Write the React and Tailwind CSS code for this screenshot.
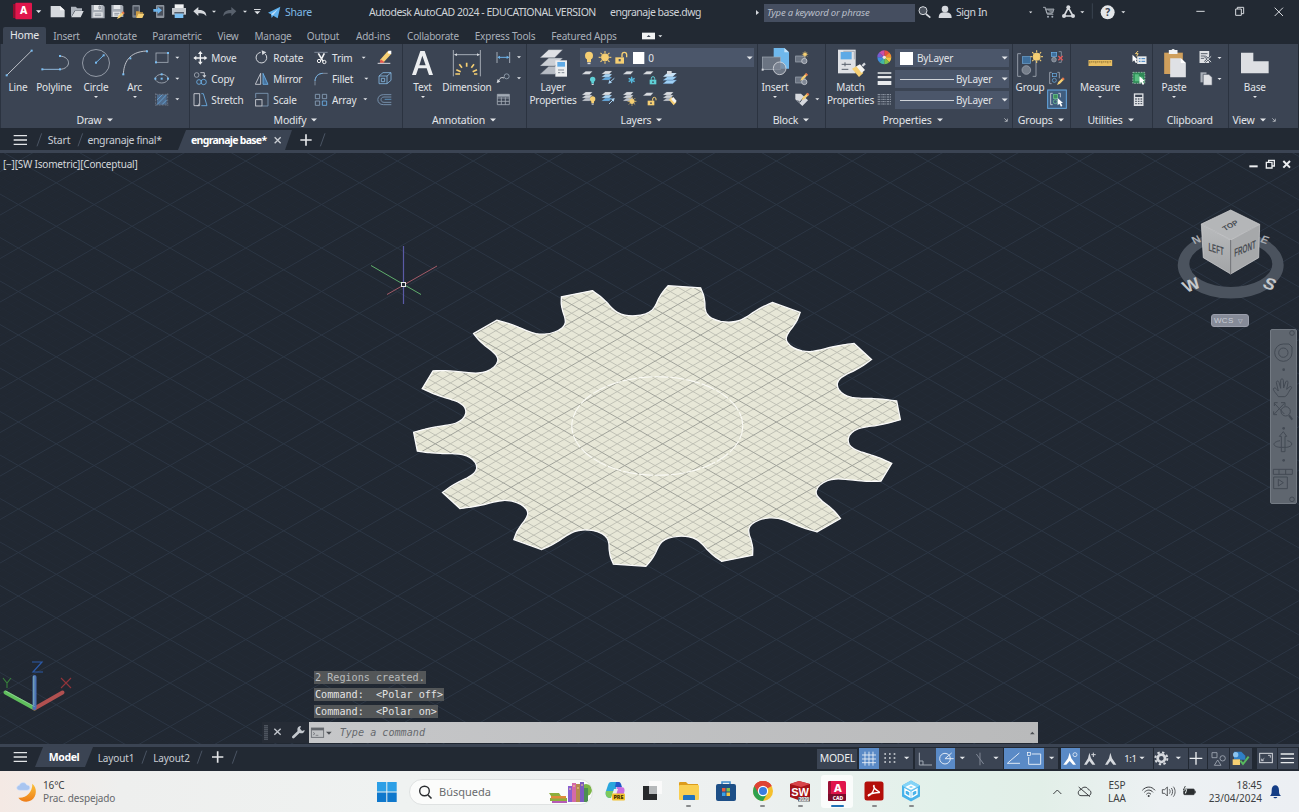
import React from "react";

const W = "#d6d9de";
const G = "#a3abb6";
const B = "#6db3ea";
const Y = "#f6cf73";

/* Icon tile: art is drawn on a 3x grid, so 3 units are one pixel. */
function S({ v, children, className = "" }) {
  const [, , w, h] = v.split(" ").map(Number);
  return (
    <svg width={w / 3} height={h / 3} viewBox={v} fill="none" className={"block shrink-0 " + className}>
      {children}
    </svg>
  );
}
const Tri = ({ x, y, s = 6 }) => <path d={`M${x - s} ${y - s / 2}h${2 * s}l${-s} ${s}z`} fill="#e3e6ea" />;
const Dots = ({ p }) => p.map(([x, y]) => <rect key={x + "-" + y} x={x - 3} y={y - 3} width="6" height="6" fill="#79bdf2" />);

function Panel({ w, label, caret = true, launch = null, foot = "justify-center", children }) {
  return (
    <section className={"flex h-[84px] shrink-0 flex-col bg-[#3b4453] pt-[3px] shadow-[inset_1px_0_0_#2b3340] " + w}>
      <div className="flex h-[63px]">{children}</div>
      <div className={"flex h-[18px] items-center gap-[5px] pt-[2px] text-[10.500px] tracking-[-0.2px] " + foot}>
        <span>{label}</span>
        {caret && <S v="0 0 18 12"><Tri x={9} y={6} s={9} /></S>}
        {launch}
      </div>
    </section>
  );
}
function Big({ v, label, label2, caretY = false, children }) {
  const w = Number(v.split(" ")[2]) / 3;
  return (
    <div className="flex shrink-0 flex-col items-center whitespace-nowrap" style={{ width: w }}>
      <S v={v}>{children}</S>
      <span className="h-[13px] pt-px leading-[13px]">{label}</span>
      {label2 && <span className="h-[13px] pt-px leading-[13px]">{label2}</span>}
      {caretY && <S v="0 0 12 21"><Tri x={6} y={12} s={6} /></S>}
    </div>
  );
}
const Cmd = ({ v, label, children, w }) => (
  <div className={"flex h-[21px] items-center gap-[3px] whitespace-nowrap " + w}>
    <S v={v}>{children}</S>
    <span className="pt-px">{label}</span>
  </div>
);
const Launch = () => (
  <S v="0 0 18 18"><path d="M4 4l8 8M13 5v8H5" stroke={W} strokeWidth="2" /></S>
);
const Sheet = ({ x, y, c = "#dadde1", s = 1 }) => (
  <path d={`M${x} ${y + 9 * s}l${11 * s} ${-9 * s}h${20 * s}l${-8 * s} ${9 * s}z`} fill={c} stroke="#6b7480" strokeWidth=".7" />
);
const Stack = ({ x, y, blue }) => (
  <g>
    <Sheet x={x} y={y + 18} c={blue ? "#62a8de" : "#b9bec6"} />
    <Sheet x={x} y={y + 9} c={blue ? "#a8d3f3" : "#cdd1d7"} />
    <Sheet x={x} y={y} />
  </g>
);
const Bulb = ({ x, y, c, s = 1 }) => (
  <g fill={c}>
    <circle cx={x} cy={y} r={8 * s} />
    <rect x={x - 4 * s} y={y + 5 * s} width={8 * s} height={8 * s} />
    <rect x={x - 3 * s} y={y + 14 * s} width={6 * s} height={3 * s} fill={W} />
  </g>
);
const Sun = ({ x, y, r = 8, c = Y }) => (
  <g stroke={c} strokeWidth={r * 0.32}>
    <circle cx={x} cy={y} r={r} fill={c} />
    {[0, 45, 90, 135, 180, 225, 270, 315].map((a) => (
      <path key={a} d={`M${x} ${y - r * 1.25}V${y - r * 1.9}`} transform={`rotate(${a} ${x} ${y})`} />
    ))}
  </g>
);
const Lock = ({ x, y, c, open }) => (
  <g>
    <rect x={x} y={y} width="20" height="14" fill={c} />
    <path d={open ? `M${x + 15} ${y}v-5a5 5 0 0 1 10 0v4` : `M${x + 5} ${y}v-4a5 5 0 0 1 10 0v4`} stroke={c} strokeWidth="3" />
    <rect x={x + 8} y={y + 5} width="4" height="5" fill="#3b4453" />
  </g>
);
const Pencil = ({ x, y }) => (
  <g>
    <path d={`M${x} ${y}l4 -9l13 -13l5 5l-13 13z`} fill={Y} />
    <path d={`M${x + 14} ${y - 19}l4 -4l5 5l-4 4z`} fill="#e5734a" />
  </g>
);

function TitleBar() {
  return (
    <header className="flex h-[25px] items-center pl-[10px] text-[10.500px] tracking-[-0.25px]">
      <S v="30 0 105 75">
        <path d="M39 12h8v42h-8z" fill="#8f0d2e" />
        <rect x="46" y="8" width="50" height="50" rx="3" fill="#e0164c" />
        <text x="71" y="43" fontSize="31" fontWeight="800" fill="#fff" textAnchor="middle" fontFamily="Noto Sans, sans-serif">A</text>
        <Tri x={116} y={35} s={8} />
      </S>
      <S v="135 0 70 75"><path d="M152 18h28l14 13v21h-42z" fill={W} /><path d="M180 18v13h14z" fill="#f6f7f8" /></S>
      <S v="205 0 60 75"><path d="M214 52V20h14l5 5h14v7h-22z" fill="#aeb4bd" /><path d="M226 33h26l-9 19h-28z" fill={W} /></S>
      <S v="265 0 60 75"><path d="M275 15h35l5 5v35h-40z" fill="#a7adb6" /><path d="M283 15h22v15h-22zM281 37h28v15h-28z" fill="#e5e7ea" /><path d="M298 18h4v9h-4zM285 42h20M285 47h20" stroke="#626b78" strokeWidth="2" /></S>
      <S v="325 0 60 75"><path d="M335 15h32l4 4v32h-36z" fill="#a7adb6" /><path d="M342 15h20v12h-20zM340 35h22v15h-22z" fill="#e5e7ea" /><path d="M344 40h15M344 45h12" stroke="#626b78" strokeWidth="2" /><Pencil x={352} y={57} /></S>
      <S v="385 0 60 75"><rect x="398" y="15" width="23" height="38" rx="3" fill="#7e858f" /><path d="M402 20h15v26h-15z" fill="#4b525e" /><path d="M409 53V34h10l3 3h8v4h-10z" fill="#c99a45" /><path d="M416 41h18l-6 13h-18z" fill={Y} /></S>
      <S v="445 0 60 75"><rect x="469" y="15" width="25" height="39" rx="3" fill="#8c939d" /><rect x="473" y="20" width="17" height="27" fill="#4b525e" /><path d="M461 27h13v-7l13 11l-13 11v-7h-13z" fill="#6db3ea" /></S>
      <S v="505 0 60 75"><path d="M525 13h27v13h-27z" fill="#f2f3f4" /><path d="M517 24h42v20h-42z" fill="#c5c9cf" /><path d="M524 36h29v5h-29z" fill="#555d69" /><path d="M525 41h26v13h-26z" fill="#7cc0f3" /></S>
      <S v="565 0 95 75"><path d="M581 34l15-13v9c16-1 24 6 24 19c-5-8-12-10-24-9v8z" fill={W} /><Tri x={643} y={35} s={6} /></S>
      <S v="660 0 90 75"><path d="M709 34l-15-13v9c-16-1-24 6-24 19c5-8 12-10 24-9v8z" fill="#59616d" /><Tri x={735} y={35} s={6} /></S>
      <S v="750 0 105 75"><path d="M762 27h20v3h-20z" fill={W} /><Tri x={772} y={38} s={9} /><path d="M804 38l37-18l-8 35l-13-8l-5 7l-2-11z" fill="#5fb1ef" /><path d="M813 43l22-17l-16 20" fill="#bfe0fa" /></S>
      <span className="w-[84px] text-[10.500px] text-[#7fb9e6]">Share</span>
      <span className="w-[241px] whitespace-nowrap tracking-[-0.48px] text-[#cfd3d8]">Autodesk AutoCAD 2024 - EDUCATIONAL VERSION</span>
      <span className="w-[145px] whitespace-nowrap tracking-[-0.5px] text-[#cfd3d8]">engranaje base.dwg</span>
      <S v="15 0 30 75" className="-ml-px"><path d="M21 30v15l9-7z" fill={W} /></S>
      <div className="flex h-[18px] w-[151px] items-center whitespace-nowrap bg-[#454e60] pl-[3px] text-[9.500px] italic tracking-[-0.2px] text-[#b9bfc9]">Type a keyword or phrase</div>
      <S v="499 0 123 75">
        <circle cx="523" cy="32" r="12" fill="#4a515c" stroke={W} strokeWidth="3" /><path d="M532 42l13 11" stroke={W} strokeWidth="5" />
        <circle cx="589" cy="27" r="10" fill={W} /><path d="M570 54c0-14 8-17 19-17s20 3 20 17z" fill={W} />
      </S>
      <span className="w-[68px] tracking-[-0.45px] text-[#d5d8dd]">Sign In</span>
      <S v="75 0 207 75">
        <Tri x={95} y={37} s={5} />
        <path d="M132 22h7l6 21h18M140 27h25l-4 12h-18z" stroke="#a7adb6" fill="#a7adb6" strokeWidth="2.5" fillOpacity=".6" /><circle cx="147" cy="50" r="3" fill={G} /><circle cx="160" cy="50" r="3" fill={G} />
        <path d="M208 23l-13 25h27z" stroke={W} strokeWidth="5" strokeLinejoin="round" /><circle cx="208" cy="22" r="6" fill={W} /><circle cx="195" cy="48" r="6" fill={W} /><circle cx="222" cy="48" r="6" fill={W} />
        <Tri x={250} y={37} s={6} /><path d="M280 10v46" stroke="#3a4350" strokeWidth="3" />
      </S>
      <S v="282 0 115 75"><circle cx="326" cy="37" r="21" fill="#e4e6e9" /><text x="326" y="48" fontSize="31" fontWeight="700" textAnchor="middle" fill="#3a4350" fontFamily="Noto Sans, sans-serif">?</text><Tri x={373} y={37} s={6} /></S>
      <S v="580 0 300 75" className="ml-auto mr-[6px]">
        <path d="M590 34h25M708 27h17v19h-17zM713 27v-5h19v19h-7M825 23l25 25M850 23l-25 25" stroke={W} strokeWidth="3" />
      </S>
    </header>
  );
}

const MENU = [
  ["Insert", "w-[41px]"], ["Annotate", "w-[58px]"], ["Parametric", "w-[64px]"], ["View", "w-[38px]"], ["Manage", "w-[52px]"],
  ["Output", "w-[48px]"], ["Add-ins", "w-[52px]"], ["Collaborate", "w-[68px]"], ["Express Tools", "w-[76px]"], ["Featured Apps", "w-[82px]"],
];
function MenuTabs() {
  return (
    <nav className="flex h-[19px] items-center pl-[3px] text-[10px] tracking-[-0.2px] text-[#a9afb9]">
      <span className="mt-[2px] flex h-[17px] w-[43px] items-center justify-center rounded-t-[2px] bg-[#3b4453] text-[10.500px] text-[#e6e8eb]">Home</span>
      {MENU.map(([t, w]) => <span key={t} className={"mt-[3px] whitespace-nowrap text-center " + w}>{t}</span>)}
      <S v="675 75 130 57"><rect x="726" y="98" width="39" height="20" fill="#f1f2f3" /><path d="M740 111h12l-6-6z" fill="#3b4453" /><Tri x={781} y={109} s={6} /></S>
    </nav>
  );
}

function Ribbon() {
  return (
    <div className="flex h-[84px] text-[10px] tracking-[-0.15px] text-[#e2e5e9]">
      <Panel w="w-[189px]" label="Draw">
        <Big v="0 141 108 99" label="Line"><path d="M20 226L95 152" stroke={W} strokeWidth="2.5" /><Dots p={[[20, 226], [95, 152]]} /></Big>
        <Big v="108 141 108 99" label="Polyline"><path d="M127 208h53" stroke="#8fb6d8" strokeWidth="3" /><path d="M180 168c34 3 34 38 0 40" stroke={G} strokeWidth="3" /><Dots p={[[127, 208], [180, 208], [180, 168]]} /></Big>
        <Big v="216 141 144 99" label="Circle" caretY><circle cx="288" cy="189" r="40.5" stroke={G} strokeWidth="2.5" /><path d="M288 188l23-22" stroke={B} strokeWidth="3" /><Dots p={[[288, 188], [311, 166]]} /></Big>
        <Big v="360 141 87 99" label="Arc" caretY><path d="M370 225C371 190 385 155 441 153" stroke={W} strokeWidth="2.5" /><Dots p={[[370, 223], [391, 175], [441, 154]]} /></Big>
        <div>
          <S v="447 141 100 63"><rect x="468" y="159" width="36" height="28" stroke={G} strokeWidth="2.5" /><Dots p={[[468, 187], [504, 159]]} /><Tri x={532} y={173} /></S>
          <S v="447 204 100 63"><ellipse cx="485" cy="236" rx="19" ry="13" stroke={G} strokeWidth="2.5" /><Dots p={[[485, 236], [466, 236], [485, 223], [504, 236]]} /><Tri x={532} y={236} /></S>
          <S v="447 267 100 63"><rect x="471" y="284" width="29" height="30" fill="#4f6d8f" /><path d="M471 300l16-16M471 314l29-30M486 314l14-14" stroke={B} strokeWidth="2" /><path d="M467 280v38M503 280v38M467 283h38M467 315h38" stroke="#7f8a99" strokeWidth="2" strokeDasharray="6 3" /><Tri x={532} y={298} /></S>
        </div>
      </Panel>

      <Panel w="w-[213px]" label="Modify">
        <div className="w-[62px] pl-[4px]">
          <Cmd v="579 150 46 48" label="Move" w="w-[62px]"><path d="M601 157v34M584 174h34" stroke="#f0f1f3" strokeWidth="4" /><path d="M601 153l7 9h-14zM601 194l7-9h-14zM580 174l9-7v14zM622 174l-9-7v14z" fill="#f0f1f3" /></Cmd>
          <Cmd v="579 213 46 48" label="Copy" w="w-[62px]"><circle cx="590" cy="225" r="7" stroke={G} strokeWidth="2.5" /><path d="M601 218h12v9" stroke={W} strokeWidth="2.5" /><path d="M607 226h12l-6 7z" fill={W} /><circle cx="597" cy="246" r="7" stroke={B} strokeWidth="2.5" /><circle cx="611" cy="246" r="8" stroke={B} strokeWidth="2.5" /></Cmd>
          <Cmd v="579 276 46 48" label="Stretch" w="w-[62px]"><path d="M582 281h17v36h-17z" stroke={W} strokeWidth="2.5" /><path d="M604 281l6 0l11 36h-17" stroke={B} strokeWidth="2.5" /><path d="M590 317h6v-6" stroke={W} strokeWidth="2" /></Cmd>
        </div>
        <div className="w-[59px] pl-[4px]">
          <Cmd v="765 150 46 48" label="Rotate" w="w-[59px]"><path d="M796 162a16 16 0 1 1-14-5" stroke={W} strokeWidth="3" /><path d="M785 151l14 6l-12 8z" fill={W} /></Cmd>
          <Cmd v="765 213 46 48" label="Mirror" w="w-[59px]"><path d="M782 220v33h-16z" stroke={W} strokeWidth="2.5" /><path d="M789 220v33h15z" stroke={B} strokeWidth="2.5" fill="#47729d" /></Cmd>
          <Cmd v="765 276 46 48" label="Scale" w="w-[59px]"><path d="M767 294v-14h37v38h-17" stroke="#7f9cba" strokeWidth="2.5" /><rect x="767" y="299" width="19" height="19" stroke={W} strokeWidth="2.5" /></Cmd>
        </div>
        <div className="w-[69px] pl-[3px]">
          <div className="flex"><Cmd v="940 150 48 48" label="Trim" w="w-[47px]"><path d="M944 157h40" stroke="#7f8a99" strokeWidth="3" /><path d="M956 160l14 24M974 160l-10 20" stroke="#f2f3f4" strokeWidth="5" /><circle cx="958" cy="183" r="5" stroke="#f2f3f4" strokeWidth="3" /><circle cx="974" cy="186" r="5" stroke="#f2f3f4" strokeWidth="3" /></Cmd><S v="1081 141 30 63"><Tri x={1092} y={173} /></S></div>
          <div className="flex"><Cmd v="940 213 48 48" label="Fillet" w="w-[47px]"><path d="M946 256v-12c0-14 9-24 24-24h14" stroke="#7f8a99" strokeWidth="3" /><path d="M946 243c1-13 9-22 23-23" stroke={B} strokeWidth="2.5" /></Cmd><S v="1081 204 30 63"><Tri x={1100} y={236} /></S></div>
          <div className="flex"><Cmd v="940 276 48 48" label="Array" w="w-[47px]"><path d="M947 283h13v13h-13zM968 283h13v13h-13zM947 303h13v13h-13z" stroke="#8ba3bd" strokeWidth="2.5" /><path d="M968 303h13v13h-13z" stroke={B} strokeWidth="2.5" /></Cmd><S v="1081 267 30 63"><Tri x={1097} y={298} /></S></div>
        </div>
        <div className="-ml-[2px]">
          <S v="1134 141 54 63"><path d="M1142 181l24-27l10 9l-22 24z" fill={Y} /><path d="M1168 152l9 0l0 11l-11-3z" fill="#fff" /><path d="M1145 178l12 9l-7 3h-8z" fill="#e4574c" /><path d="M1136 190h38" stroke={W} strokeWidth="3" /></S>
          <S v="1134 204 54 63"><path d="M1140 228h24v23h-24zM1140 228l12-10h24v23l-12 10M1164 228l12-10M1147 235h10v10h-10z" stroke="#86b8e2" strokeWidth="2.5" /></S>
          <S v="1134 267 54 63"><path d="M1177 284h-24c-22 0-22 30 0 30h24M1177 291h-22c-12 0-12 16 0 16h22" stroke="#7f9cba" strokeWidth="2.5" /><path d="M1177 298h-20" stroke={B} strokeWidth="2" /></S>
        </div>
      </Panel>

      <Panel w="w-[124px]" label="Annotation">
        <Big v="6 141 123 99" label="Text" caretY><path d="M36 225L61 153h13l25 72h-12l-7-20H55l-7 20zM58 196h19l-10-29z" fill="#eceef0" /></Big>
        <Big v="129 141 144 99" label="Dimension"><path d="M160 150v79M241 150v79M164 164h74" stroke="#b9bfc8" strokeWidth="2.5" /><path d="M162 164l9-4v8zM240 164l-9-4v8z" fill={W} /><path d="M200 188v12M178 193l8 10M222 193l-8 10M169 209l13 6M231 209l-13 6M166 222h14M222 222h10" stroke={Y} strokeWidth="5" /></Big>
        <div>
          <S v="273 141 105 63"><path d="M291 156v33M329 156v33" stroke={G} strokeWidth="3" /><path d="M294 172h32" stroke={B} strokeWidth="3" /><path d="M292 172l8-5v10zM328 172l-8-5v10z" fill={B} /><Tri x={357} y={172} /></S>
          <S v="273 204 105 63"><path d="M294 247c5-14 10-16 18-13" stroke={W} strokeWidth="3" /><path d="M290 249l3-12l8 8z" fill={W} /><circle cx="320" cy="229" r="7.500" stroke="#8a97a6" strokeWidth="3" /><Tri x={357} y={235} /></S>
          <S v="273 267 105 63"><path d="M292 283h36v31h-36zM292 294h36M292 304h36M304 292v22M316 292v22" stroke={G} strokeWidth="2.5" /><path d="M292 283h36v7h-36z" fill={G} /></S>
        </div>
      </Panel>

      <Panel w="w-[231px]" label="Layers">
        <Big v="378 141 162 99" label="Layer" label2="Properties">
          <path d="M420 223l26-24h42l-24 24z" fill="#b7bcc4" stroke="#59616d" /><path d="M420 198l26-24h42l-24 24z" fill="#cbcfd5" stroke="#59616d" /><path d="M420 173l26-24h42l-24 24z" fill="#dfe1e5" stroke="#59616d" />
          <rect x="466" y="181" width="35" height="49" fill="#eceef0" /><rect x="472" y="186" width="23" height="14" fill="#5eaae6" /><path d="M474 210h18M474 218h7M485 218h8" stroke="#6a7380" strokeWidth="2.500" />
        </Big>
        <div className="pt-px">
          <div className="flex h-[19px] w-[174px] items-center bg-[#4b566a]">
            <S v="540 147 205 54">
              <Bulb x={567} y={167} c={Y} s={1.5} /><Sun x={615} y={172} r={10} /><rect x="646" y="172" width="26" height="19" fill={Y} /><path d="M666 172v-8a7 7 0 0 1 14 0v8" stroke={Y} strokeWidth="4" /><rect x="656" y="177" width="6" height="7" fill="#4b566a" />
              <rect x="699" y="156" width="34" height="36" fill="#fff" />
            </S>
            <span className="flex-1 pt-px">0</span>
            <S v="0 0 27 18"><Tri x={14} y={9} s={9} /></S>
          </div>
          <div className="flex">
            <S v="540 204 61 63"><Sheet x={546} y={217} /><Bulb x={578} y={241} c="#5fd0d6" /></S>
            <S v="601 204 61 63"><Stack x={606} y={216} blue /><path d="M644 238l-14 12" stroke="#a8d3f3" strokeWidth="3" /><path d="M626 254l3-11l8 8z" fill="#a8d3f3" /></S>
            <S v="662 204 61 63"><Sheet x={668} y={217} /><path d="M694 233v20M685 238l18 10M703 238l-18 10" stroke="#55b9dd" strokeWidth="4" /></S>
            <S v="723 204 61 63"><Sheet x={729} y={217} /><Lock x={749} y={242} c="#5fd0d6" /></S>
            <S v="784 204 61 63"><path d="M790 254l13-11h28l-12 11zM790 244l13-11h28l-12 11z" fill="#9fd0f5" stroke="#4b7aa6" /><path d="M790 233l13-11h28l-12 11z" fill="#c8e4fa" /><path d="M802 216h14v10h-14z" fill={W} /></S>
          </div>
          <div className="flex">
            <S v="540 267 61 63"><Stack x={546} y={279} /><Bulb x={578} y={300} c={Y} /></S>
            <S v="601 267 61 63"><Stack x={606} y={279} blue /><path d="M628 315l14-14" stroke="#a8d3f3" strokeWidth="3" /><path d="M645 297l-3 11l-8-8z" fill="#a8d3f3" /></S>
            <S v="662 267 61 63"><Stack x={668} y={279} /><Sun x={695} y={307} r={7} /></S>
            <S v="723 267 61 63"><Sheet x={729} y={281} /><Lock x={743} y={305} c={Y} open /></S>
            <S v="784 267 61 63"><Stack x={790} y={279} /><path d="M808 302l8-8l14 16l-8 9z" fill={Y} /><path d="M814 300l7-6l10 12l-6 6z" fill="#f4f4f2" /></S>
          </div>
        </div>
      </Panel>

      <Panel w="w-[68px]" label="Block">
        <Big v="21 141 108 99" label="Insert" caretY>
          <path d="M71 144h32l14 13v49H71z" fill="#6fb8ec" /><path d="M103 144v13h14z" fill="#c4e2f8" /><rect x="37" y="171" width="54" height="38" fill="#6b7482" stroke={G} strokeWidth="2" /><circle cx="89" cy="205" r="19" fill="#7f8794" fillOpacity=".75" stroke={W} strokeWidth="2.500" /><rect x="35" y="206" width="6" height="6" fill={W} />
        </Big>
        <div>
          <S v="129 141 84 63"><rect x="137" y="168" width="28" height="18" fill="#6b7482" stroke={G} strokeWidth="2" /><circle cx="163" cy="183" r="8" fill="#7f8794" stroke={W} strokeWidth="2" /><Sun x={165} y={163} r={5} /></S>
          <S v="129 204 84 63"><rect x="137" y="231" width="28" height="18" fill="#6b7482" stroke={G} strokeWidth="2" /><circle cx="163" cy="246" r="8" fill="#7f8794" stroke={W} strokeWidth="2" /><Pencil x={151} y={242} /></S>
          <S v="129 267 84 63"><path d="M136 281h17l21 20l-17 17l-21-20z" fill={W} /><path d="M143 301l6 6l16-19" stroke="#3b4453" strokeWidth="3" /><Pencil x={155} y={301} /><Tri x={202} y={298} /></S>
        </div>
      </Panel>

      <Panel w="w-[187px]" label="Properties" foot="relative justify-center pr-[12px]" launch={<span className="absolute right-[3px] top-[7px]"><Launch /></span>}>
        <Big v="228 141 153 99" label="Match" label2="Properties">
          <path d="M267 149h53v71h-53z" fill="#dfe1e5" /><path d="M275 156h33v22h-33z" fill="#5eaae6" /><path d="M283 154h33v24" stroke="#8a929e" strokeWidth="2" /><path d="M278 193h28M288 187v12M278 208h20" stroke="#59616d" strokeWidth="3" />
          <path d="M309 206l16-9l18 22l-13 12z" fill={Y} /><path d="M322 199l11-6l15 17l-10 9z" fill="#f4f4f2" /><path d="M340 198l8-8" stroke={W} strokeWidth="7" />
        </Big>
        <div className="-ml-px w-[20px]">
          <S v="378 141 57 63">
            {["#e94f3d", "#f08a32", "#f5c542", "#7fc24b", "#43b7a5", "#3f8fe0", "#7a5bd0", "#c94fa8"].map((c, i) => (
              <path key={c} d="M406 172V151A21 21 0 0 1 420.900 157.200z" fill={c} transform={`rotate(${i * 45} 406 172)`} />
            ))}
            <circle cx="406" cy="172" r="5" fill="#efe7df" />
          </S>
          <S v="378 204 57 63"><path d="M386 217h41v4h-41zM386 228h41v7h-41zM386 243h41v12h-41z" fill="#e8eaec" /></S>
          <S v="378 267 57 63"><path d="M386 284h41M386 291h41M386 298h41M386 305h41M386 312h41" stroke="#98a0ac" strokeWidth="3" strokeDasharray="7 2 3 2" /></S>
        </div>
        <div className="flex flex-col gap-[3px] pt-[2px]">
          <div className="flex h-[18px] w-[114px] items-center bg-[#4b566a]"><span className="ml-[5px] mr-[4px] size-[13px] bg-white" /><span className="flex-1">ByLayer</span><S v="0 0 27 18"><Tri x={14} y={9} s={9} /></S></div>
          {[0, 1].map((i) => (
            <div key={i} className="flex h-[18px] w-[114px] items-center bg-[#4b566a]"><span className="ml-[5px] mr-[2px] h-px w-[54px] bg-[#cfd3d8]" /><span className="flex-1">ByLayer</span><S v="0 0 27 18"><Tri x={14} y={9} s={9} /></S></div>
          ))}
        </div>
      </Panel>

      <Panel w="w-[57.500px]" label="Groups">
        <Big v="36 141 108 99" label="Group">
          <path d="M63 161h-10v68h10M98 229h10v-68" stroke={G} strokeWidth="2.500" /><rect x="67" y="170" width="24" height="20" fill="#3f6f9c" stroke="#6fa9d8" strokeWidth="2" /><circle cx="79" cy="210" r="13" fill="#767e8a" stroke="#a9afb9" strokeWidth="2" /><Sun x={110} y={170} r={10} />
        </Big>
        <div className="-ml-px">
          <S v="141 141 60 63"><rect x="154" y="157" width="16" height="12" fill="#3f6f9c" stroke={B} strokeWidth="2" /><circle cx="162" cy="179" r="7" fill="#767e8a" stroke={G} strokeWidth="2" /><path d="M176 155h8v32h-8" stroke={G} strokeWidth="2" /><path d="M175 168l13 13M188 168l-13 13" stroke="#e25757" strokeWidth="4" /></S>
          <S v="141 204 60 63"><path d="M155 217h-6v34h6M172 217h6v18" stroke={G} strokeWidth="2.500" /><rect x="157" y="220" width="12" height="10" stroke={B} strokeWidth="2" /><circle cx="163" cy="241" r="6" stroke={B} strokeWidth="2" /><Pencil x={171} y={255} /></S>
          <S v="141 267 60 63"><rect x="143" y="270" width="56" height="55" fill="#405d7e" stroke="#65a9e3" strokeWidth="3" /><path d="M158 280h-6v34h6M175 280h6v12" stroke={W} strokeWidth="2.500" /><rect x="160" y="284" width="13" height="11" fill="#3f8f5c" stroke="#6fce8f" strokeWidth="2" /><circle cx="166" cy="305" r="6" stroke="#6fce8f" strokeWidth="2" /><path d="M173 294v22l5-5l5 9l4-3l-4-8h6z" fill="#fff" /></S>
        </div>
      </Panel>

      <Panel w="w-[82px]" label="Utilities">
        <Big v="208.500 141 183 99" label="Measure" caretY><rect x="264" y="180" width="71" height="18" fill="#e9bf62" /><path d="M268 183v7M274 183v5M280 183v5M286 183v7M292 183v5M298 183v5M304 183v7M310 183v5M316 183v5M322 183v7M329 183v5" stroke="#6b5424" strokeWidth="2" /></Big>
        <div>
          <S v="391.500 141 60 63"><path d="M413 153l-8 8h8l-5 8" stroke={Y} strokeWidth="3" /><path d="M396 164v22l5-5l5 9l4-3l-4-8h6z" fill="#fff" /><rect x="410" y="169" width="28" height="23" fill="#e8eaec" /><path d="M415 176h5M415 184h5M423 176h11M423 184h11" stroke="#3b7fc0" strokeWidth="3" /></S>
          <S v="391.500 204 60 63"><rect x="397" y="217" width="36" height="33" fill="#2f8a57" stroke="#b9d9c5" strokeWidth="2" strokeDasharray="5 3" /><path d="M403 223h12v7h12v14h-24z" fill="#58bd80" /><path d="M417 229v22l5-5l5 9l4-3l-4-8h7z" fill="#fff" /></S>
          <S v="391.500 267 60 63"><rect x="400" y="280" width="29" height="38" fill="#dfe1e5" /><path d="M404 284h21v7h-21z" fill="#3b4453" /><path d="M404 297h21M404 304h21M404 311h21" stroke="#59616d" strokeWidth="4" strokeDasharray="5 3" /></S>
        </div>
      </Panel>

      <Panel w="w-[76.500px]" label="Clipboard" caret={false}>
        <Big v="454.500 141 135 99" label="Paste" caretY><path d="M491 158h56v64h-56z" fill="#cf9f5c" /><path d="M505 150h8c2-4 8-4 10 0h8v12h-26z" fill="#f1f2f3" /><path d="M509 175h32l15 14v43h-47z" fill="#dfe1e5" /><path d="M541 175v14h15z" fill="#fff" /></Big>
        <div>
          <S v="589.500 141 90 63"><path d="M597 153h29v36h-29z" fill="#dfe1e5" /><path d="M601 161h20M601 168h12M601 175h10" stroke="#59616d" strokeWidth="3" /><path d="M613 169l19 17M632 169l-19 17" stroke="#3b4453" strokeWidth="6" /><path d="M613 169l19 17M632 169l-19 17" stroke={W} strokeWidth="3" /><Tri x={657} y={174} /></S>
          <S v="589.500 204 90 63"><path d="M600 217h18v30h-18z" fill="#aab0b9" /><path d="M608 223h17l10 9v24h-27z" fill="#dfe1e5" stroke="#3b4453" strokeWidth="2" /><Tri x={657} y={237} /></S>
        </div>
      </Panel>

      <Panel w="w-[70px]" label="View" foot="pl-[4.500px]" launch={<Launch />}>
        <Big v="684 141 161 99" label="Base" caretY><path d="M723 158h37v26h46v36h-83z" fill="#dddfe3" /></Big>
      </Panel>
    </div>
  );
}

function FileTabs() {
  return (
    <div className="flex h-[25px] items-center border-b-[3px] border-[#3b4453] pl-[10px] pt-[2px] text-[10.500px] tracking-[-0.2px] text-[#c9cdd3]">
      <S v="30 391 105 60"><path d="M41 408h40M41 421h40M41 434h40" stroke="#e3e5e8" strokeWidth="4" /><path d="M111 440l14-39" stroke="#4a5463" strokeWidth="3" /></S>
      <span className="w-[28px] text-center">Start</span>
      <S v="219 391 39 60"><path d="M234 440l14-39" stroke="#4a5463" strokeWidth="3" /></S>
      <span className="w-[77px] whitespace-nowrap text-center tracking-[-0.350px]">engranaje final*</span>
      <div className="ml-[15px] flex h-[20px] w-[114px] items-center bg-[#3b4453] pl-[13px] font-bold text-white [clip-path:polygon(8px_0,100%_0,calc(100%_-_7px)_100%,0_100%)]">
        <span className="w-[82px] whitespace-nowrap tracking-[-0.7px]">engranaje base*</span>
        <S v="820 405 27 30"><path d="M825 412l18 18M843 412l-18 18" stroke="#c9cdd3" strokeWidth="4" /></S>
      </div>
      <S v="876 391 120 60"><path d="M901 421h34M918 404v34" stroke="#e3e5e8" strokeWidth="5" /><path d="M961 440l14-39" stroke="#4a5463" strokeWidth="3" /></S>
    </div>
  );
}

/* Gear outline: 14 teeth on a ground plane seen at the isometric angle. */
const TEETH = 14;
const CX = 657;
const CY = 426;
const PROFILE = [[3.85, 243.6], [5.1, 232], [6.1, 220], [6.8, 210], [7.9, 201], [9.8, 195], [12.857, 192.5]];
const pt = (deg, r) => {
  const a = (deg * Math.PI) / 180;
  return [CX + r * Math.sin(a), CY - r * Math.cos(a) * 0.5765];
};
function gearPath() {
  const step = 360 / TEETH;
  let d = "";
  for (let i = 0; i < TEETH; i++) {
    const c = 6.45 + i * step;
    const run = [
      ...PROFILE.map(([a, r]) => pt(c + a, r)),
      ...PROFILE.slice(0, -1).reverse().map(([a, r]) => pt(c + step - a, r)),
    ];
    d += (i ? "L" : "M") + run[0].map((n) => n.toFixed(1)).join(" ");
    for (let k = 0; k < run.length - 1; k++) {
      const p0 = run[Math.max(0, k - 1)], p1 = run[k], p2 = run[k + 1], p3 = run[Math.min(run.length - 1, k + 2)];
      const q = [p1[0] + (p2[0] - p0[0]) / 6, p1[1] + (p2[1] - p0[1]) / 6, p2[0] - (p3[0] - p1[0]) / 6, p2[1] - (p3[1] - p1[1]) / 6, p2[0], p2[1]];
      d += "C" + q.map((n) => n.toFixed(1)).join(" ");
    }
  }
  return d + "Z";
}
const GEAR = gearPath();

/* Isometric grid: every fifth line in each direction is a major one. */
const SLOPE = 43.5 / 75.8;
function gridPath(major) {
  let d = "";
  for (let k = -130; k <= 130; k++) {
    if ((k % 5 === 0) !== major) continue;
    const y = 313.3 + k * 8.7;
    const l = 662.7 * SLOPE;
    const r = (1299 - 662.7) * SLOPE;
    d += `M0 ${(y - l).toFixed(1)}L1299 ${(y + r).toFixed(1)}M0 ${(y + l).toFixed(1)}L1299 ${(y - r).toFixed(1)}`;
  }
  return d;
}
const MINOR = gridPath(false);
const MAJOR = gridPath(true);

const Face = ({ m, size = 12, w = 700, fill = "#4a4e54", children }) => (
  <text transform={m} fontSize={size} fontWeight={w} fill={fill} textAnchor="middle" fontFamily="Liberation Sans, sans-serif">{children}</text>
);

function Scene() {
  return (
    <svg className="absolute inset-0 block" width="1299" height="591" viewBox="0 153 1299 591" fill="none">
      <defs>
        <clipPath id="gear"><path d={GEAR} /></clipPath>
        <linearGradient id="cubeL" x1="0" y1="0" x2="0" y2="1"><stop stopColor="#b9bbbd" /><stop offset="1" stopColor="#a2a4a6" /></linearGradient>
      </defs>
      <rect y="153" width="1299" height="591" fill="#212832" />
      <path d={MINOR} stroke="#232b36" strokeWidth=".8" />
      <path d={MAJOR} stroke="#2c3644" />
      <path d={GEAR} fill="#e7e7d7" />
      <g clipPath="url(#gear)">
        <path d={MINOR} stroke="#bcbdb2" strokeWidth=".9" />
        <path d={MAJOR} stroke="#a1a39b" />
      </g>
      <path d={GEAR} stroke="#fbfbfb" strokeWidth="1.3" />
      <ellipse cx="657.300" cy="426" rx="85.500" ry="49.300" stroke="#fafaf5" strokeWidth="1.1" strokeDasharray="14 2" />

      <path d="M403.500 246v58" stroke="#5a5aa6" strokeWidth="1.2" />
      <path d="M387 294.500L437 266" stroke="#a35a68" />
      <path d="M371 265.500L421 294.500" stroke="#5fae6c" />
      <rect x="401.500" y="282.500" width="4" height="4" stroke="#e8e8e8" fill="#222933" />

      <path fillRule="evenodd" d="M1177.700 265a53 33.500 0 1 0 106 0a53 33.500 0 1 0 -106 0zM1189.300 264a41.500 23 0 1 0 83 0a41.500 23 0 1 0 -83 0z" fill="#4b535e" />
      <Face m="matrix(.87 -.3 .45 .8 1198 243)" size={12} fill="#a9adb2">N</Face>
      <Face m="matrix(.87 .3 -.45 .8 1263 243)" size={12} fill="#a9adb2">E</Face>
      <Face m="matrix(.95 -.38 .5 .85 1194 290)" size={17} fill="#c6c9cc">W</Face>
      <Face m="matrix(.95 .38 -.5 .85 1267 289)" size={17} fill="#c6c9cc">S</Face>
      <path d="M1230.700 210L1259.700 224.300L1230.700 240L1201.300 224z" fill="#b4b6b8" />
      <path d="M1201.300 224L1230.700 240V274L1203.300 257.700z" fill="url(#cubeL)" />
      <path d="M1259.700 224.300L1230.700 240V274L1258.700 257.700z" fill="#a6a8aa" />
      <path d="M1230.700 210L1259.700 224.300L1230.700 240L1201.300 224zM1201.300 224L1203.300 257.700L1230.700 274V240M1230.700 274L1258.700 257.700L1259.700 224.300" stroke="#d2d3d4" strokeWidth=".7" />
      <path d="M1230.700 240v34" stroke="#6a6d71" />
      <Face m="matrix(.72 -.4 .5 .6 1232 227.500)" size={9.5}>TOP</Face>
      <Face m="matrix(.58 .2 0 1.100 1216 253)" size={10.5}>LEFT</Face>
      <Face m="matrix(.6 -.25 0 1.100 1245 252.500)" size={10.5}>FRONT</Face>

      <g strokeLinecap="round" strokeWidth="4">
        <path d="M34.500 708.500L5.500 692.500" stroke="#5fbf5c" /><path d="M34.500 708.500L62.500 692.500" stroke="#b05050" /><path d="M34.500 708L34.500 677" stroke="#4a72b8" />
      </g>
      <path d="M34.500 706.500L5.500 691M33.800 705V676" stroke="#a6d8b0" strokeOpacity=".6" />
      <path d="M32 662h10l-9 10h10" stroke="#2c5aa8" strokeWidth="1.2" />
      <path d="M3 678l4 5l4-5M7 683v5" stroke="#38803c" strokeWidth="1.1" />
      <path d="M61 678l10 10M71 678l-10 10" stroke="#94343a" strokeWidth="1.1" />
    </svg>
  );
}

function Viewport() {
  return (
    <main className="relative h-[591px] overflow-hidden">
      <Scene />
      <div className="relative flex h-full flex-col">
        <div className="flex h-[21px] items-center justify-between pl-[3px] pr-[7px] text-[10px] text-[#d5d8dc]">
          <span className="tracking-[-0.2px]">[−][SW Isometric][Conceptual]</span>
          <S v="744 469 132 45"><path d="M748 500h25" stroke="#eceef0" strokeWidth="6" /><path d="M799 488h17v17h-17zM806 487v-5h17v17h-6" stroke="#eceef0" strokeWidth="4" /><path d="M850 484l20 20M870 484l-20 20" stroke="#eceef0" strokeWidth="6" /></S>
        </div>
        <div className="mt-auto flex flex-col items-start gap-[4px] pl-[314px] font-['DejaVu_Sans_Mono','Liberation_Mono',monospace] text-[10.150px] leading-[13px] text-[#e4e4e4]">
          <span className="whitespace-pre bg-[#535658] px-px text-[#b9bbbc]">2 Regions created.</span>
          <span className="whitespace-pre bg-[#535658] px-px">Command:  &lt;Polar off&gt;</span>
          <span className="whitespace-pre bg-[#535658] px-px">Command:  &lt;Polar on&gt;</span>
        </div>
        <div className="mb-px mt-[4px] flex h-[21px] items-center pl-[262px]">
          <S v="786 216 141 63" className="bg-[#262c36]">
            <path d="M795 226v44M801 226v44" stroke="#9aa1ab" strokeWidth="3" strokeDasharray="3 3" /><path d="M823 236l19 18M842 236l-19 18" stroke="#c3c7cd" strokeWidth="4" />
            <path d="M880 261l20-19" stroke="#c3c7cd" strokeWidth="8" strokeLinecap="round" /><path d="M903 228a11 11 0 1 0 11 12l-8 3l-6-6z" fill="#c3c7cd" />
          </S>
          <div className="flex h-[21px] w-[729px] items-center bg-gradient-to-r from-[#c6c7c9] to-[#b9babb]">
            <S v="933 216 80 63"><rect x="940" y="234" width="37" height="28" stroke="#63676c" strokeWidth="2.500" fill="#bfc1c3" /><path d="M940 234h37v7h-37z" fill="#63676c" /><path d="M945 247l6 4l-6 4M953 256h8" stroke="#63676c" strokeWidth="2" /><path d="M984 245h17l-8 9z" fill="#4a4d52" /></S>
            <span className="ml-[4px] flex-1 pt-px font-['DejaVu_Sans_Mono','Liberation_Mono',monospace] text-[10.150px] italic text-[#66696d]">Type a command</span>
            <S v="0 0 27 18"><path d="M3 13h14l-7-8z" fill="#4a4d52" /></S>
          </div>
        </div>
      </div>
      <div className="absolute left-[1211px] top-[161px] flex h-[13px] w-[38px] items-center rounded-[3px] border border-[#9a9eab] bg-[#868b98] pl-[2px] font-['Liberation_Sans',sans-serif] text-[8px] tracking-[0.3px] text-[#c8ccd6]">WCS<span className="ml-[4px] text-[6px]">▽</span></div>
      <div className="absolute left-[1270px] top-[176px] h-[175px] w-[27px] rounded-[2px] border border-[#737a83] bg-[#5f666f]">
        <S v="333 420 78 519">
          <g stroke="#434a54" strokeWidth="3">
            <circle cx="396" cy="429" r="7" /><path d="M370 462a26 26 0 1 0 26 26v-17l-9-9z" /><circle cx="370" cy="488" r="14" />
            <path d="M355 620c-6-10-20-22-13-26c5-2 9 5 13 9l-6-25c0-6 6-7 8-1l5 18v-24c1-6 7-6 8 0l1 23l6-18c2-5 8-4 7 2l-4 20l8-7c5-4 9 1 5 5c-8 9-12 24-20 24z" />
            <path d="M343 640l30 32M373 640l-30 32M343 648v-10h10M363 638h12v10M341 664v10h10" /><circle cx="377" cy="664" r="14" /><path d="M387 676l10 13" strokeWidth="6" />
            <path d="M364 785v-46h-6l12-14l10 14h-5v46zM360 752c-24 4-24 18 0 20l20 0c20-3 20-16 2-20" />
            <path d="M340 838h57v15h-57zM357 838v15M377 838v15M341 861h41v35h-41zM355 868v20l15-10z" /><circle cx="396" cy="928" r="7" />
          </g>
          <circle cx="371" cy="539" r="4" fill="#434a54" /><circle cx="371" cy="715" r="4" fill="#434a54" /><circle cx="371" cy="811" r="4" fill="#434a54" />
        </S>
      </div>
    </main>
  );
}

const Dk = ({ v, on, gap = "", children }) => <S v={v} className={(on ? "bg-[#5a8ac6] " : "bg-[#3b4453] ") + gap}>{children}</S>;
function StatusBar() {
  return (
    <div className="flex h-[27px] items-center border-t-[3px] border-[#3b4453] pb-[3px] pl-[10px] text-[10px] tracking-[-0.15px] text-[#c9cdd3]">
      <S v="30 288 105 69" className="-mr-[9px]"><path d="M41 308h40M41 321h40M41 334h40" stroke="#e3e5e8" strokeWidth="4" /></S>
      <div className="-ml-px -mt-px flex h-[20px] w-[58px] items-center justify-center bg-[#3b4453] text-[10.500px] font-bold tracking-[-0.4px] text-white [clip-path:polygon(8px_0,100%_0,calc(100%_-_8px)_100%,0_100%)]">Model</div>
      <span className="ml-[4px] w-[38px] text-center">Layout1</span>
      <S v="405 288 48 69"><path d="M426 341l14-39" stroke="#4a5463" strokeWidth="3" /></S>
      <span className="w-[41px] text-center">Layout2</span>
      <S v="576 288 150 69"><path d="M592 341l14-39M697 341l14-39" stroke="#4a5463" strokeWidth="3" /><path d="M636 321h34M653 304v34" stroke="#e3e5e8" strokeWidth="5" /></S>
      <div className="ml-auto mr-[1.500px] mt-[2px] flex items-center">
        <span className="flex h-[20px] w-[40px] items-center justify-center bg-[#3b4453] text-[10.500px] tracking-[-0.300px] text-[#eceef0]">MODEL</span>
        <Dk v="178 24 58 62" on gap="ml-[2px]"><path d="M187 45h42M187 57h42M187 68h42M196 35v42M208 35v42M220 35v42" stroke="#eef3f9" strokeWidth="2.500" /></Dk>
        <Dk v="236 24 103 62"><path d="M252 42h34M252 54h34M252 66h34" stroke={W} strokeWidth="5" strokeDasharray="5 9" /><Tri x={319} y={54} s={8} /></Dk>
        <Dk v="345 24 62 62" gap="ml-[2px]"><path d="M358 38v37h38M358 63h11v12" stroke={G} strokeWidth="3" /></Dk>
        <Dk v="407 24 59 62" on><circle cx="434" cy="56" r="16" stroke="#dfe9f5" strokeWidth="3" /><path d="M434 56h26M434 56l20-17" stroke="#dfe9f5" strokeWidth="3" /></Dk>
        <Dk v="466 24 144 62"><Tri x={488} y={54} s={8} /><path d="M541 38v38M530 42l22 30" stroke="#7f8896" strokeWidth="3" /><Tri x={589} y={54} s={8} /></Dk>
        <Dk v="613 24 58 62" on gap="ml-px"><path d="M659 39l-36 31h38" stroke="#dfe9f5" strokeWidth="3" /></Dk>
        <Dk v="673 24 58 62" on gap="ml-[0.670px]"><path d="M696 42h27v31h-36V51" stroke="#dfe9f5" strokeWidth="3" /><rect x="683" y="37" width="10" height="10" stroke="#fff" strokeWidth="2" /></Dk>
        <Dk v="731 24 44 62"><Tri x={754} y={54} s={8} /></Dk>
        <Dk v="782 24 58 62" on gap="ml-[2.330px]"><path d="M808 38l-5 17l-14 19h9l10-11l10 11h9l-14-19z" fill="#fff" /><circle cx="824" cy="44" r="6" stroke="#fff" strokeWidth="2" /></Dk>
        <Dk v="840 24 133 62"><path d="M868 38l-4 17l-12 19h8l8-11l9 11h9l-13-19z" fill={W} /><path d="M880 38v13M874 44h13" stroke={W} strokeWidth="3" /><path d="M931 38l-4 17l-12 19h8l8-11l9 11h9l-13-19z" fill={W} /></Dk>
        <span className="flex h-[20.600px] w-[12px] items-center bg-[#3b4453] text-[9.500px] tracking-[-0.3px] text-[#eceef0]">1:1</span>
        <Dk v="1009 24 49 62"><Tri x={1027} y={54} s={8} /></Dk>
        <Dk v="1062 24 103 62" gap="ml-[1.330px]"><circle cx="1084" cy="55" r="11" stroke={W} strokeWidth="8" /><circle cx="1084" cy="55" r="18" stroke={W} strokeWidth="6" strokeDasharray="7 7.140" /><Tri x={1135} y={54} s={8} /></Dk>
        <Dk v="1167 24 53 62" gap="ml-[0.670px]"><path d="M1169 55h38M1188 36v38" stroke="#eceef0" strokeWidth="4" /></Dk>
        <Dk v="1223 24 65 62" gap="ml-px"><path d="M1235 38h15v15h-15zM1252 60l10 16h-20z" stroke={G} strokeWidth="2.500" /><circle cx="1267" cy="55" r="8" stroke={G} strokeWidth="2.500" /></Dk>
        <Dk v="1291 24 66 62" gap="ml-px"><path d="M1303 35h22l12 12v12h-34z" fill="#2f7fc6" /><circle cx="1308" cy="44" r="8" fill="#8cc4ef" /><rect x="1299" y="58" width="22" height="17" fill={Y} /><path d="M1322 62l8 10l17-22" stroke="#58b95f" strokeWidth="6" /></Dk>
        <Dk v="1370 24 60 62" gap="ml-[4.330px]"><rect x="1378" y="40" width="38" height="28" stroke={W} strokeWidth="3" /><path d="M1403 46h7v7M1384 62l8-7M1384 56v6h6" stroke={W} strokeWidth="2.500" /></Dk>
        <Dk v="1434 24 59 62" gap="ml-[1.330px]"><path d="M1442 42h40M1442 55h40M1442 68h40" stroke="#e8eaec" strokeWidth="4" /></Dk>
      </div>
    </div>
  );
}

const TaskIcon = ({ children, dot, active }) => (
  <div className="flex h-full w-[37.100px] flex-col items-center justify-center">
    <div className={"flex h-[33px] w-[32px] flex-col items-center pt-[4px] " + (active ? "rounded-[3px] bg-white/80" : "")}>
      <svg width="24" height="24" viewBox="0 0 24 24" fill="none" className="block shrink-0">{children}</svg>
      <span className={"mt-[2px] h-[2px] shrink-0 rounded-full " + (active ? "w-[13px] bg-[#1f6fb5]" : dot ? "w-[5px] bg-[#888b8d]" : "w-0")} />
    </div>
  </div>
);
function Taskbar() {
  return (
    <footer className="flex h-[41px] items-center bg-[linear-gradient(90deg,#f4e9e4_0,#eeefee_120px,#eff2f1_400px,#edf0f0_750px,#e2f1ea_940px,#e2efe8_1040px,#edf1f3_1160px,#eceff3_100%)] text-[#3c3f42]">
      <div className="flex w-[367px] items-center pl-[14px]">
        <S v="42 372 78 96"><defs><linearGradient id="moon" x1="0" y1="0" x2="0" y2="1"><stop stopColor="#fbc23a" /><stop offset="1" stopColor="#ee7d18" /></linearGradient></defs><path d="M97 395c15 12 14 38-3 50c-14 8-31 4-39-8c24 2 42-16 42-42z" fill="url(#moon)" /><path d="M60 415c-13 0-12-14-2-15c3-11 19-11 22-1c13 0 12 16 1 16z" fill="#a9c5f0" stroke="#d5e3fa" strokeWidth="2" /></S>
        <div className="ml-[3px] text-[10px] leading-[13px] tracking-[-0.15px]"><div>16°C</div><div className="text-[#66696c]">Prac. despejado</div></div>
      </div>
      <svg width="38" height="24" viewBox="0 0 38 24" className="shrink-0"><path d="M10 2h9.300v9.500h-9.300zM20.300 2h9.400v9.500h-9.400z" fill="#2c9fe6" /><path d="M10 12.500h9.300v9.500h-9.300zM20.300 12.500h9.400v9.500h-9.400z" fill="#0f78cc" /></svg>
      <div className="ml-[4px] flex h-[26px] w-[184px] shrink-0 items-center overflow-hidden rounded-full border border-[#dfe2e2] bg-[#fbfcfb] text-[11px] text-[#686b6d]">
        <svg width="29" height="24" viewBox="0 0 29 24" fill="none"><circle cx="14.500" cy="11" r="4.800" stroke="#2a2d30" strokeWidth="1.400" /><path d="M18 15l3.500 3.500" stroke="#2a2d30" strokeWidth="1.600" /></svg>
        <span className="flex-1">Búsqueda</span>
        <svg width="44" height="24" viewBox="0 0 44 24">
          <path d="M1 13h10l2 3H3zM2 18h17v3H2z" fill="#8cae3c" /><path d="M3 16h15v2.500H3z" fill="#e08a3c" /><path d="M4 21h15v2H4z" fill="#b65bb5" /><circle cx="38" cy="10" r="6" fill="#7bb547" />
          <path d="M20 6h4v16h-4z" fill="#8a5fd0" /><path d="M24 3h4v19h-4z" fill="#d56aa8" /><path d="M28 4h4v18h-4z" fill="#b58a4e" /><path d="M32 2h4v20h-4z" fill="#7c5bc0" /><path d="M36 8h4v14h-4z" fill="#4c8f52" /><path d="M21 9h2M25 6h2M29 8h2M33 5h2" stroke="#f4d78a" />
        </svg>
      </div>
      <div className="ml-[3px] flex h-full shrink-0">
        <TaskIcon>
          <path d="M8 3h7l-5 16H7c-4 0-5-4-4-7l2-6c.600-2 1.500-3 3-3z" fill="#29a6dd" /><path d="M13 3h2c3 0 3 2 4 5h-7z" fill="#2357c8" /><path d="M14 8h4c4 0 4 3 3 6l-1 3h-9z" fill="#c96fe0" /><path d="M3 12h8l-2 7H7c-3.500 0-5-3-4-7z" fill="#7cc95c" /><path d="M8 19l3-9h4l-3 9z" fill="#eceeee" /><rect x="9" y="14.500" width="13" height="7" rx="1" fill="#f2c230" /><text x="15.500" y="20.200" fontSize="5.500" fontWeight="800" textAnchor="middle" fill="#3a2c00" fontFamily="Noto Sans, sans-serif">PRE</text>
        </TaskIcon>
        <TaskIcon><rect x="9" y="2" width="13" height="13" fill="#fafafa" /><rect x="3" y="7" width="14" height="14" fill="#27292b" /><path d="M9 7h8v8H9z" fill="#b5b8ba" /></TaskIcon>
        <TaskIcon dot><path d="M2 4c0-1 1-1 1-1h6l2 2h10v4H2z" fill="#dd9c1c" /><rect x="2" y="6" width="20" height="15" rx="1" fill="#f9cf52" /><path d="M6 21v-4c0-1 1-1 1-1h10c1 0 1 1 1 1v4z" fill="#2173c0" /></TaskIcon>
        <TaskIcon><path d="M8 6V3h8v3" stroke="#3c8bcc" strokeWidth="1.500" /><rect x="2" y="5" width="20" height="17" rx="2" fill="#1d4f87" /><path d="M8 9h3.500v3.500H8z" fill="#e95b3c" /><path d="M12.500 9H16v3.500h-3.500z" fill="#7fc24b" /><path d="M8 13.500h3.500V17H8z" fill="#3aa0e6" /><path d="M12.500 13.500H16V17h-3.500z" fill="#f5c542" /></TaskIcon>
        <TaskIcon dot><circle cx="12" cy="12" r="10" fill="#f5c02e" /><path d="M12 12L3.340 7A10 10 0 0 1 20.660 7z" fill="#de4335" /><path d="M12 12L3.340 7A10 10 0 0 0 12 22l4-7z" fill="#2fa14f" /><path d="M12 7h8.700a10 10 0 0 0-17.400 0L8 15z" fill="#de4335" /><circle cx="12" cy="12" r="5.200" fill="#fff" /><circle cx="12" cy="12" r="4" fill="#3a7de0" /></TaskIcon>
        <TaskIcon dot><path d="M2 5l9-3l11 3v13l-9 4l-11-4z" fill="#a31318" /><path d="M2 5l9-3l11 3l-9 3z" fill="#d8444a" /><text x="12" y="16.500" fontSize="11" fontWeight="800" textAnchor="middle" fill="#fff" fontFamily="Liberation Sans, sans-serif">SW</text><rect x="10" y="18" width="12" height="4.500" fill="#606366" /><text x="16" y="22" fontSize="4.500" fontWeight="700" textAnchor="middle" fill="#fff" fontFamily="Liberation Sans, sans-serif">2020</text></TaskIcon>
        <TaskIcon active><rect x="3" y="2" width="18" height="20" rx="1.500" fill="#e0164c" /><path d="M3 3.500C3 2 4.500 2 4.500 2H6v20H4.500C3 22 3 20.500 3 20.500z" fill="#9a1036" /><path d="M3 15h18v5.500c0 1.500-1.500 1.500-1.500 1.500h-15C3 22 3 20.500 3 20.500z" fill="#7a0c2a" /><text x="13" y="13" fontSize="11" fontWeight="800" textAnchor="middle" fill="#fff" fontFamily="Noto Sans, sans-serif">A</text><text x="13" y="20.500" fontSize="5" fontWeight="800" textAnchor="middle" fill="#fff" fontFamily="Noto Sans, sans-serif">CAD</text></TaskIcon>
        <TaskIcon dot><rect x="2.500" y="2.500" width="19" height="19" rx="2.500" fill="#b30f0a" /><path d="M12 6.500c1.500 4-2.500 9-5.500 10.500c-1-.500 0-2.500 11-3.500c.5-1.500-5-1.500-6-6.500z" stroke="#fff" strokeWidth="1.300" strokeLinejoin="round" /></TaskIcon>
        <TaskIcon dot><path d="M12 1.500l9 5v11l-9 5l-9-5v-11z" fill="#49b3ea" /><path d="M12 1.500l9 5L12 12L3 6.500z" fill="#84d4f7" /><path d="M6 10l5 3v5l-5-3zM18 10l-5 3v5l5-3zM8 8l4-2l4 2l-4 2z" stroke="#fff" strokeWidth="1.400" /></TaskIcon>
      </div>
      <div className="ml-auto flex h-full items-center text-[10px] leading-[13px]">
        <S v="750 93 156 123"><path d="M760 162l12-12l12 12" stroke="#3c3f42" strokeWidth="3" /><path d="M843 167c-11 0-11-17 0-18c5-11 20-9 22 0c11 2 10 18 0 18z" stroke="#3c3f42" strokeWidth="3" /><path d="M836 141l34 29" stroke="#3c3f42" strokeWidth="3" /></S>
        <div className="w-[30px] text-center"><div>ESP</div><div>LAA</div></div>
        <S v="996 93 207 123">
          <path d="M1027 151c11-13 28-13 38 0M1033 157c8-9 19-9 26 0M1039 163c4-5 10-5 14 0" stroke="#3c3f42" strokeWidth="3" /><circle cx="1046" cy="168" r="3" fill="#3c3f42" />
          <path d="M1087 149h7l8-8v27l-8-8h-7zM1108 148c3 4 3 9 0 13M1114 144c5 6 5 15 0 22M1120 140c7 8 7 22 0 30" stroke="#3c3f42" strokeWidth="2.500" />
          <rect x="1151" y="147" width="32" height="17" rx="3" fill="#2b2e30" stroke="#2b2e30" strokeWidth="2" /><path d="M1185 152v8" stroke="#2b2e30" strokeWidth="4" /><path d="M1158 138l-7 12h8l-3 10" stroke="#e7eeec" strokeWidth="4" /><path d="M1156 138l-6 12h7l-4 9" stroke="#2b2e30" strokeWidth="2.500" />
        </S>
        <div className="w-[61px] whitespace-nowrap text-right"><div>18:45</div><div>23/04/2024</div></div>
        <S v="1386 93 111 123"><path d="M1410 168c5-5 5-9 5-17c0-20 22-20 22 0c0 8 0 12 6 17z" fill="#143d86" /><path d="M1420 171h12c-2 5-10 5-12 0z" fill="#143d86" /></S>
      </div>
    </footer>
  );
}

export default function App() {
  return (
    <div className="flex h-[812px] w-[1299px] flex-col overflow-hidden bg-[#222933] font-['Noto_Sans',sans-serif] leading-none">
      <TitleBar />
      <MenuTabs />
      <Ribbon />
      <FileTabs />
      <Viewport />
      <StatusBar />
      <Taskbar />
    </div>
  );
}
